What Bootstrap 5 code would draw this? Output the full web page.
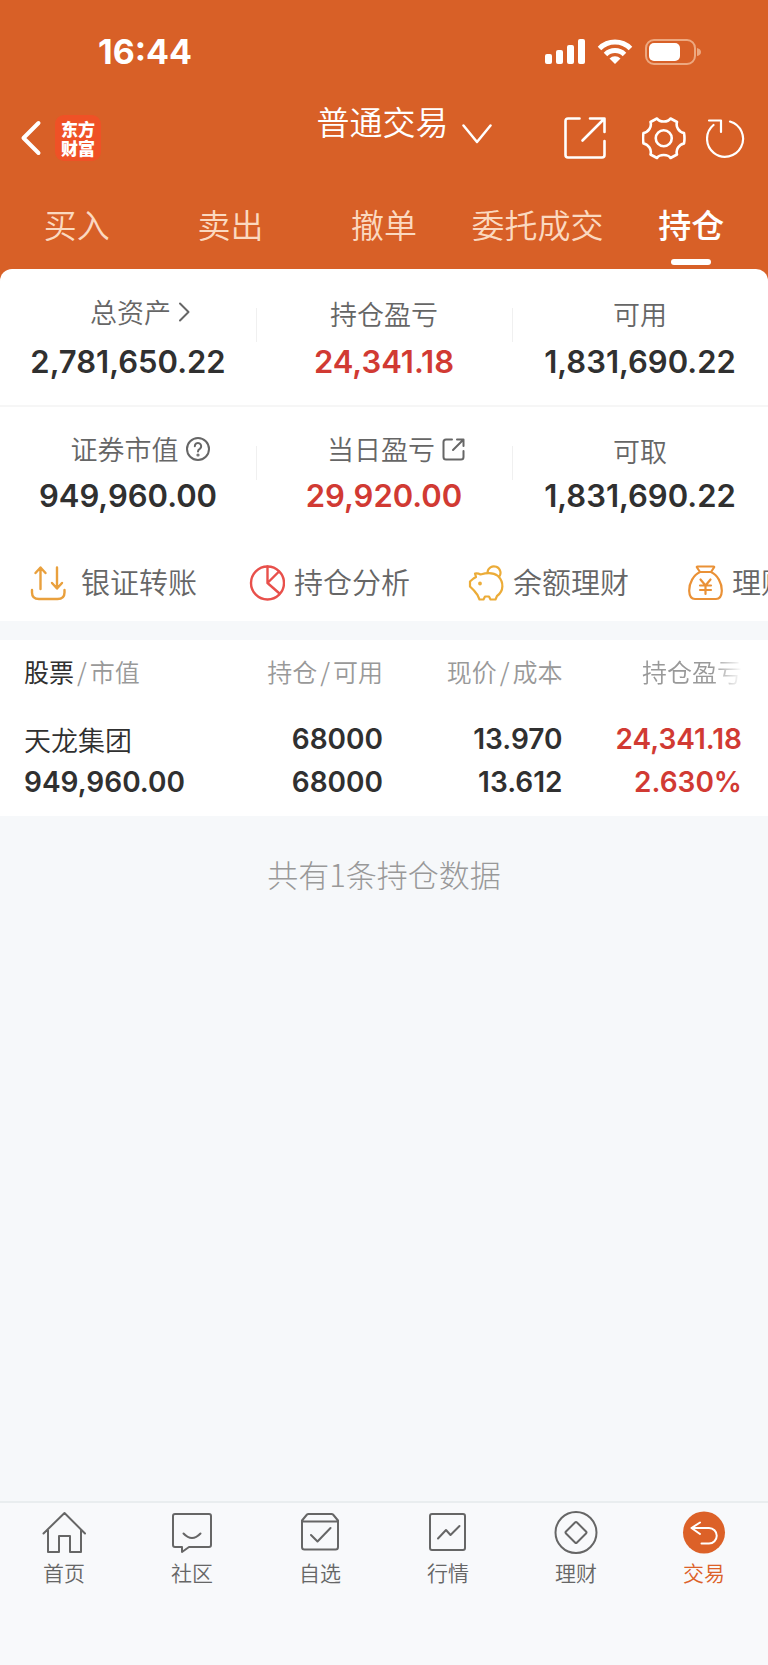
<!DOCTYPE html>
<html lang="zh-CN">
<head>
<meta charset="utf-8">
<meta name="viewport" content="width=device-width, initial-scale=1">
<title>持仓</title>
<link rel="stylesheet" href="https://cdn.jsdelivr.net/npm/bootstrap@5.3.0/dist/css/bootstrap.min.css">
<style>
  :root { --brand: #d86027; --ink: #303030; --rise: #d13a33; --muted: #666; --faint: #999; --page: #f6f8fa; }
  body { font-family: "Noto Sans CJK SC", sans-serif; font-weight: 350; background: var(--page); color: var(--ink); }
  svg { display: block; flex: none; fill: none; stroke: currentColor; stroke-linecap: round; stroke-linejoin: round; }
  button { font-weight: inherit; }
  .plain { background: none; border: 0; padding: 0; color: inherit; }
  .num { font-family: Inter, "Liberation Sans", sans-serif; font-weight: 600; }
  .rise { color: var(--rise); }

  .top-area { background: var(--brand); color: #fff; padding-bottom: 14px; margin-bottom: -14px; }
  .status { height: 104px; padding: 0 67px 0 98px; }
  .clock { font-family: Inter, "Liberation Sans", sans-serif; font-weight: 700; font-size: 34px; line-height: 40px; }
  .title-row { display: grid; grid-template-columns: 1fr auto 1fr; height: 68px; padding: 0 23px 0 20px; }
  .back-group { gap: 13px; }
  .title-btn { font-size: 33px; line-height: 34px; padding-left: 43px; }
  .title-btn svg { margin: 20px 0 0 13px; }
  .app-logo { width: 46px; height: 46px; border-radius: 9px; background: #ef5126; font-size: 17px; line-height: 19px; font-weight: 900; }
  .gear { margin: 0 20px 0 36px; }
  .tabs a { flex: 1 1 0; color: #fbd9c0; font-size: 33px; line-height: 44px; padding-top: 30px; text-align: center; text-decoration: none; white-space: nowrap; }
  .tabs a::after { content: ""; display: block; width: 40px; height: 6px; border-radius: 3px; margin: 13px auto 4px; }
  .tabs a.active { color: #fff; font-weight: 500; }
  .tabs a.active::after { background: #fff; }

  .panel { background: #fff; border-radius: 12px 12px 0 0; }
  .stat { flex: 1 1 0; position: relative; text-align: center; padding: 25px 0 23px; }
  .stat + .stat::before { content: ""; position: absolute; left: 0; top: 39px; height: 34px; border-left: 1px solid #f0f0f0; }
  .stat-label { font-size: 27px; line-height: 40px; color: var(--muted); }
  .stat-label.with-icon { display: flex; align-items: center; justify-content: center; gap: 7px; line-height: 36px; padding: 0 0 4px 24px; }
  .stat .num { font-size: 31px; line-height: 40px; margin-top: 8px; }
  .stats + .stats { border-top: 2px solid #f6f6f6; }
  .stats + .stats .num { margin-top: 5px; }
  .stats + .stats .stat { padding-top: 24px; }
  .actions { padding: 18px 0 16px 30px; overflow: hidden; }
  .actions a { flex: 0 0 219px; font-size: 29px; line-height: 48px; color: var(--muted); text-decoration: none; gap: 9px; white-space: nowrap; }
  .actions a:first-child { gap: 15px; }
  .actions svg { margin-top: 4px; }
  .c-amber { color: #e9a03d; } .c-red { color: #e8504b; } .c-gold { color: #ecac38; } .c-orange { color: #ea9136; }

  .holdings { background: #fff; margin-top: 19px; padding: 11px 26px 12px 24px; }
  .holdings table { width: 100%; table-layout: fixed; }
  .holdings th { font-size: 25px; line-height: 40px; font-weight: 350; color: var(--faint); padding: 0 0 27px; white-space: nowrap; }
  .holdings th b { font-weight: 400; color: var(--ink); }
  .holdings th i { font-style: normal; padding: 0 3px; }
  .holdings td { font-size: 28px; line-height: 43px; padding: 0; }
  .holdings td .stock-name { font-family: "Noto Sans CJK SC", sans-serif; font-size: 27px; font-weight: 350; }
  .fade-end { -webkit-mask-image: linear-gradient(to right, #000 70%, transparent 100%); mask-image: linear-gradient(to right, #000 70%, transparent 100%); }
  .total { font-size: 31px; line-height: 44px; font-weight: 300; color: var(--faint); padding-top: 36px; }

  .tabbar { background: #f8f9fb; border-top: 2px solid #e9edef; padding: 8px 0 78px; }
  .tabbar a { flex: 1 1 0; color: var(--muted); text-decoration: none; font-size: 21px; line-height: 30px; gap: 2px; }
  .tabbar a.active { color: #dc6128; }
</style>
</head>
<body class="min-vh-100 d-flex flex-column">

<header class="top-area">
  <div class="status d-flex align-items-center justify-content-between">
    <div class="clock">16:44</div>
    <div class="d-flex align-items-center">
      <svg width="40" height="26" viewBox="0 0 40 26" style="fill:#fff;stroke:none"><rect x="0" y="15" width="7" height="10" rx="2"/><rect x="11" y="11" width="7" height="14" rx="2"/><rect x="22" y="6" width="7" height="19" rx="2"/><rect x="33" y="0" width="7" height="25" rx="2"/></svg>
      <svg class="ms-2 me-2 px-1" width="44" height="26" viewBox="-1 0 36 26" stroke-width="5"><g style="stroke-linecap:butt"><path d="M1.500 9.500a22 22 0 0 1 31 0"/><path d="M7.500 15.500a13.500 13.500 0 0 1 19 0"/></g><path d="M17 25l-5.500-5.500a8 8 0 0 1 11 0z" fill="#fff" stroke="none"/></svg>
      <svg width="56" height="26" viewBox="0 0 56 26"><rect x="1" y="1" width="49" height="24" rx="8" stroke="#eda880" stroke-width="2"/><rect x="4" y="4" width="31" height="18" rx="5" fill="#fff" stroke="none"/><path d="M52 9q4 1 4 4t-4 4z" fill="#eda880" stroke="none"/></svg>
    </div>
  </div>
  <div class="title-row">
    <div class="back-group d-flex align-items-center">
      <button class="plain" aria-label="返回"><svg width="22" height="36" viewBox="0 0 22 36" stroke-width="4"><path d="M18.500 3L3.500 18l15 15"/></svg></button>
      <div class="app-logo d-flex align-items-center justify-content-center"><div>东方<br>财富</div></div>
    </div>
    <button class="plain title-btn d-flex align-items-start">普通交易<svg width="30" height="20" viewBox="0 0 30 20" stroke-width="2.500"><path d="M1.500 1.500L15 18 28.500 1.500"/></svg></button>
    <div class="d-flex align-items-center justify-content-end">
      <button class="plain" aria-label="分享"><svg width="42" height="42" viewBox="0 0 42 42" stroke-width="2.600"><path d="M15.500 1.500H4q-2.500 0-2.500 2.500v34q0 2.500 2.500 2.500h34q2.500 0 2.500-2.500V24"/><path d="M26 1.500h14.500V15M40 2L18.500 23.500"/></svg></button>
      <button class="plain gear" aria-label="设置"><svg width="44" height="43" viewBox="0 0 44 43" stroke-width="2.600"><path d="M15 1.500C17.500 5.500 26 5.500 28.500 1.500L35 5C33.500 10 37 15 42 16Q43 21.500 42 26.500C37 27.500 33.500 32.500 35 37.500L28.500 41C26 37 17.500 37 15 41L8.500 37.500C10 32.500 6.500 27.500 1.500 26.500Q.500 21.500 1.500 16C6.500 15 10 10 8.500 5z"/><circle cx="21.750" cy="21.250" r="8"/></svg></button>
      <button class="plain" aria-label="刷新"><svg width="39" height="39" viewBox="0 0 39 39" stroke-width="2.200"><path d="M24 2.500A18 18 0 1 1 7.500 6M3 1.500h12V13"/></svg></button>
    </div>
  </div>
  <nav class="tabs d-flex">
    <a href="#">买入</a><a href="#">卖出</a><a href="#">撤单</a><a href="#">委托成交</a><a href="#" class="active" aria-current="page">持仓</a>
  </nav>
</header>

<main class="flex-grow-1">
  <section class="panel">
    <div class="stats d-flex">
      <div class="stat">
        <div class="stat-label with-icon">总资产<svg width="12" height="20" viewBox="0 0 12 20" stroke-width="2"><path d="M2 1.500l8.500 8.500L2 18.500"/></svg></div>
        <div class="num">2,781,650.22</div>
      </div>
      <div class="stat"><div class="stat-label">持仓盈亏</div><div class="num rise">24,341.18</div></div>
      <div class="stat"><div class="stat-label">可用</div><div class="num">1,831,690.22</div></div>
    </div>
    <div class="stats d-flex">
      <div class="stat">
        <div class="stat-label with-icon">证券市值<svg width="24" height="24" viewBox="0 0 24 24" stroke-width="2"><circle cx="12" cy="12" r="11"/><path d="M8.800 9.200a3.200 3.200 0 1 1 5 2.600q-1.800 1.100-1.800 2.700"/><circle cx="12" cy="18" r=".600"/></svg></div>
        <div class="num">949,960.00</div>
      </div>
      <div class="stat">
        <div class="stat-label with-icon">当日盈亏<svg width="23" height="23" viewBox="0 0 23 23" stroke-width="2"><path d="M10 1.500H4Q1.500 1.500 1.500 4v15q0 2.500 2.500 2.500h15q2.500 0 2.500-2.500v-6M15 1.500h6.500V8M21 2L11 12"/></svg></div>
        <div class="num rise">29,920.00</div>
      </div>
      <div class="stat"><div class="stat-label">可取</div><div class="num">1,831,690.22</div></div>
    </div>
    <nav class="actions d-flex">
      <a href="#" class="d-flex align-items-center"><svg class="c-amber" width="36" height="36" viewBox="0 0 36 36" stroke-width="2.400"><path d="M2 25v2.500Q2 34 9 34h18.500q7 0 7-6.500V25M10.500 24V3M5.500 8l5-5.500 5 5.500M27 2.500V23M22 18l5 5.500 5-5.500"/></svg>银证转账</a>
      <a href="#" class="d-flex align-items-center"><svg class="c-red" width="36" height="36" viewBox="0 0 36 36" stroke-width="2.400"><circle cx="18.500" cy="18" r="16.500"/><path d="M18.500 1.500V18L30 6.500M18.500 18l12 10.500"/></svg>持仓分析</a>
      <a href="#" class="d-flex align-items-center"><svg class="c-gold" width="36" height="36" viewBox="0 0 36 36" stroke-width="2.200"><path d="M7 8.500Q10 8 12.500 9.500 24 6 30 11c6 6 6 15-1 20l-1.500 3.500h-5l-1.500-3h-4l-1.500 3h-4L9.500 30 6 25.500 2 21.500v-5L5.500 13.500 8 12z"/><path d="M19.500 7.500a6.500 6.500 0 1 1 11.500 4.500"/><circle cx="12" cy="18.500" r=".800" fill="#ecac38"/></svg>余额理财</a>
      <a href="#" class="d-flex align-items-center"><svg class="c-orange" width="36" height="36" viewBox="0 0 36 36" stroke-width="2.200"><path d="M10.500 1.500h16q1 0 .5 1L24 7H13L10 2.500q-.500-1 .500-1zM13 7h11C30.500 10 35 18 34.800 26q-.300 8-5.800 8H8q-5.500 0-5.800-8C2 18 6.500 10 13 7z"/><path d="M13.500 14.500l5 6 5-6M18.500 20.500V29M13 20.500h11M13 25h11"/></svg>理财</a>
    </nav>
  </section>

  <section class="holdings">
    <table>
      <thead>
        <tr><th><b>股票</b><i>/</i>市值</th><th class="text-end">持仓<i>/</i>可用</th><th class="text-end">现价<i>/</i>成本</th><th class="text-end"><span class="fade-end d-inline-block">持仓盈亏</span></th></tr>
      </thead>
      <tbody class="num">
        <tr><td><div class="stock-name">天龙集团</div><div>949,960.00</div></td><td class="text-end">68000<br>68000</td><td class="text-end">13.970<br>13.612</td><td class="text-end rise">24,341.18<br>2.630%</td></tr>
      </tbody>
    </table>
  </section>
  <p class="total text-center mb-0">共有1条持仓数据</p>
</main>

<nav class="tabbar d-flex">
  <a href="#" class="d-flex flex-column align-items-center"><svg width="44" height="44" viewBox="0 0 44 44" stroke-width="2"><path d="M1.500 22.500L22.500 2 43 22.500M6 19v22h11V25h11v16h11V19"/></svg>首页</a>
  <a href="#" class="d-flex flex-column align-items-center"><svg width="44" height="44" viewBox="0 0 44 44" stroke-width="2"><path d="M5 3h34q2 0 2 2v29q0 2-2 2H19l-7 5v-5H5q-2 0-2-2V5q0-2 2-2z"/><path d="M13.500 22.500q8.500 9 17 0"/></svg>社区</a>
  <a href="#" class="d-flex flex-column align-items-center"><svg width="44" height="44" viewBox="0 0 44 44" stroke-width="2"><path d="M4 9.500l5-6q.5-.500 1.500-.500h23q1 0 1.500.500l5 6V36q0 2.500-2.500 2.500h-31Q4 38.500 4 36zM4 10.500h36M13 24l6.500 6.500L32.500 17"/></svg>自选</a>
  <a href="#" class="d-flex flex-column align-items-center"><svg width="44" height="44" viewBox="0 0 44 44" stroke-width="2"><rect x="4" y="3" width="35" height="36" rx="2"/><path d="M12 27.500l8-8.500 4.500 5L33.500 15"/></svg>行情</a>
  <a href="#" class="d-flex flex-column align-items-center"><svg width="44" height="44" viewBox="0 0 44 44" stroke-width="2"><circle cx="22" cy="21.500" r="20.500"/><path d="M21 11.500q1-1 2 0l9 9q1 1 0 2l-9 9q-1 1-2 0l-9-9q-1-1 0-2z"/></svg>理财</a>
  <a href="#" class="active d-flex flex-column align-items-center" aria-current="page"><svg width="44" height="44" viewBox="0 0 44 44"><circle cx="22" cy="21.500" r="21" fill="#dc6128" stroke="none"/><path d="M18 11.500L9.500 17l8.500 6M10 17h17a7.500 7.500 0 0 1 0 15.500h-7.500" style="stroke:#fff" stroke-width="2"/></svg>交易</a>
</nav>

<script src="https://cdn.jsdelivr.net/npm/bootstrap@5.3.0/dist/js/bootstrap.bundle.min.js"></script>
</body>
</html>
